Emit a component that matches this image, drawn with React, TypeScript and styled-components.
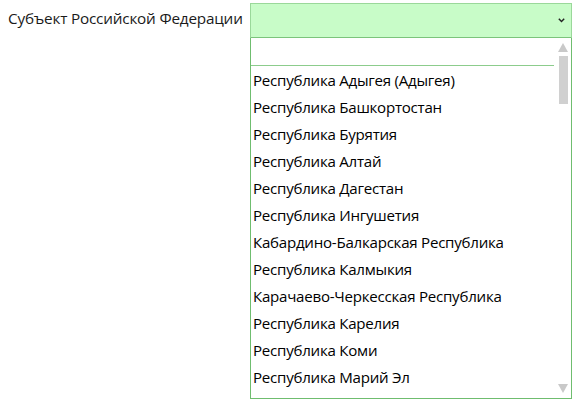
import React from "react";
import styled, { createGlobalStyle } from "styled-components";

const Global = createGlobalStyle`
  html, body { margin: 0; padding: 0; background: #ffffff; }
  body { font-family: "Open Sans", "Noto Sans", sans-serif; color: #000; }
`;

const Row = styled.div`
  display: flex;
  align-items: flex-start;
  padding: 3px 0 0 8px;
`;

const Label = styled.div`
  width: 242px;
  height: 30px;
  display: flex;
  align-items: center;
  font-size: 15.3px;
  letter-spacing: -0.2px;
  color: #1a1a1a;
`;

const Field = styled.div`
  width: 322px;
  display: flex;
  flex-direction: column;
`;

const SelectBox = styled.div`
  box-sizing: border-box;
  height: 36px;
  background: #c8fcc8;
  border: 1px solid #9ad89a;
  border-bottom: 2px solid #7cc47c;
  display: flex;
  align-items: center;
  justify-content: flex-end;
  padding-right: 6px;
`;

const Dropdown = styled.div`
  margin-top: -1px;
  box-sizing: border-box;
  width: 322px;
  height: 361px;
  background: #ffffff;
  border: 1px solid #6fbd6f;
  border-top: none;
  display: flex;
`;

const Content = styled.div`
  flex: 1;
  display: flex;
  flex-direction: column;
  min-width: 0;
`;

const Search = styled.div`
  height: 27px;
  border-bottom: 1px solid #8ccc8c;
  flex-shrink: 0;
`;

const List = styled.div`
  display: flex;
  flex-direction: column;
`;

const Item = styled.div`
  height: 27px;
  display: flex;
  align-items: center;
  padding-left: 2px;
  font-size: 15.1px;
  letter-spacing: -0.25px;
  white-space: nowrap;
  color: #000;
`;

const ScrollBar = styled.div`
  width: 17px;
  flex-shrink: 0;
  display: flex;
  flex-direction: column;
  align-items: center;
  padding: 5px 0 5px 1px;
  box-sizing: border-box;
`;

const ArrowUp = styled.div`
  width: 0;
  height: 0;
  border-left: 5px solid transparent;
  border-right: 5px solid transparent;
  border-bottom: 9px solid #c9c9c9;
`;

const ArrowDown = styled.div`
  width: 0;
  height: 0;
  border-left: 5px solid transparent;
  border-right: 5px solid transparent;
  border-top: 9px solid #c9c9c9;
`;

const Thumb = styled.div`
  width: 9px;
  height: 48px;
  margin-top: 4px;
  background: #d0d0d0;
`;

const Spacer = styled.div`
  flex: 1;
`;

const regions = [
  "Республика Адыгея (Адыгея)",
  "Республика Башкортостан",
  "Республика Бурятия",
  "Республика Алтай",
  "Республика Дагестан",
  "Республика Ингушетия",
  "Кабардино-Балкарская Республика",
  "Республика Калмыкия",
  "Карачаево-Черкесская Республика",
  "Республика Карелия",
  "Республика Коми",
  "Республика Марий Эл",
];

export default function App() {
  return (
    <>
      <Global />
      <Row>
        <Label>Субъект Российской Федерации</Label>
        <Field>
          <SelectBox>
            <svg width="7" height="5" viewBox="0 0 7 5">
              <path d="M0.8 0.8 L3.5 3.6 L6.2 0.8" fill="none" stroke="#222" strokeWidth="1.4" />
            </svg>
          </SelectBox>
          <Dropdown>
            <Content>
              <Search />
              <List>
                {regions.map((r) => (
                  <Item key={r}>{r}</Item>
                ))}
              </List>
            </Content>
            <ScrollBar>
              <ArrowUp />
              <Thumb />
              <Spacer />
              <ArrowDown />
            </ScrollBar>
          </Dropdown>
        </Field>
      </Row>
    </>
  );
}
